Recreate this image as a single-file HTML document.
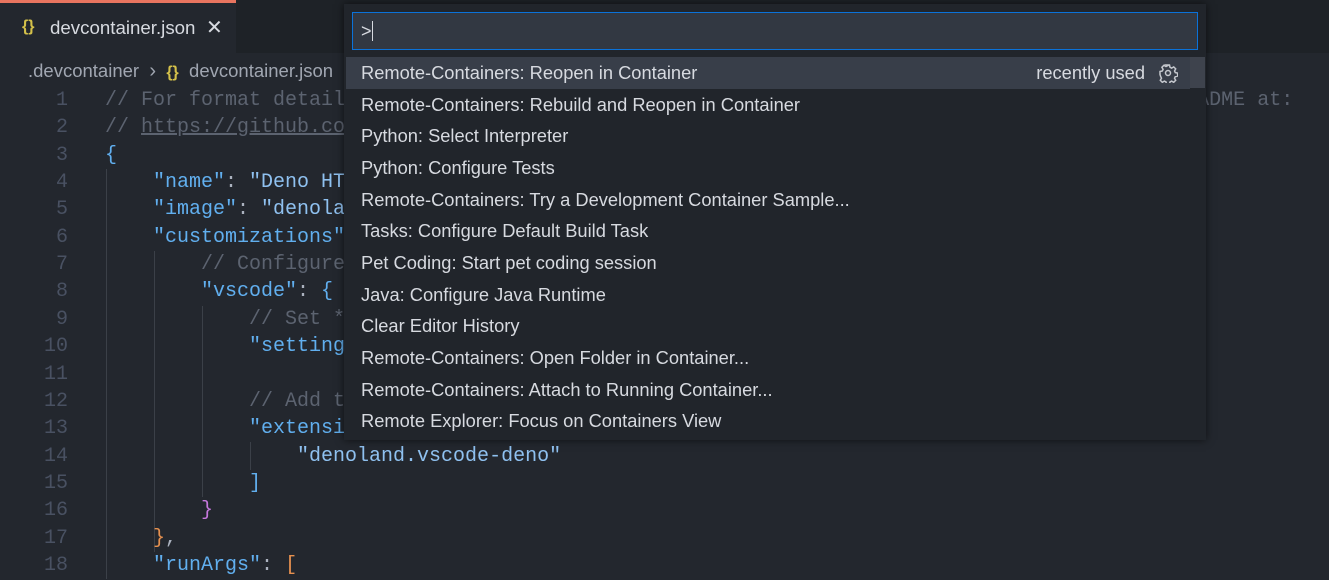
<!DOCTYPE html>
<html><head><meta charset="utf-8"><style>
*{margin:0;padding:0;box-sizing:border-box}
body{width:1329px;height:580px;overflow:hidden;background:#23272e;font-family:"Liberation Sans",sans-serif;position:relative}
.tabbar{position:absolute;left:0;top:0;width:1329px;height:53px;background:#1e2227}
.tab{position:absolute;left:0;top:0;width:236px;height:53px;background:#23272e;border-top:3px solid #e8745f}
.tab .t{position:absolute;left:50px;top:14px;font-size:18.7px;color:#d7dae0}
.br{position:absolute;top:60px;font-size:18.5px;color:#a0a6b1;white-space:pre}
.code{position:absolute;left:0;top:87px;font-family:"Liberation Mono",monospace;font-size:20px}
.ln{position:absolute;left:0;width:68px;text-align:right;color:#495162;height:27.35px;line-height:27.35px}
.cl{position:absolute;left:105px;white-space:pre;height:27.35px;line-height:27.35px;color:#abb2bf}
.c{color:#5c6370}.k{color:#61afef}.s{color:#8fc1f0}.b{color:#61afef}.p{color:#c678dd}.o{color:#e5904f}
.g{position:absolute;width:1px;background:#3b4048}
.qp{position:absolute;left:344px;top:4px;width:862px;height:436px;background:#21252b;box-shadow:0 0 8px rgba(0,0,0,.6)}
.in{position:absolute;left:8px;top:8px;width:846px;height:38px;background:#323842;border:1px solid #0b72d9;color:#d7dae0;font-size:18px;padding:8px 8px}
.row{position:absolute;left:2px;width:844px;height:32px;line-height:32px;padding-left:15px;font-size:18.3px;color:#d7dae0}
.sel{background:#383e49}
</style></head><body>
<div class="tabbar"><div class="tab"><span style="position:absolute;left:22px;top:15px;font-size:16px;color:#d4c14a;font-weight:bold">{}</span><span class="t">devcontainer.json</span><span style="position:absolute;left:206px;top:12px;font-size:20px;color:#d7dae0">✕</span></div></div>
<div class="br" style="left:28px">.devcontainer  <span style="font-size:20px">›</span>  <span style="color:#d4c14a;font-weight:bold;font-size:16px">{}</span>  devcontainer.json</div>
<div class="code">
<div class="g" style="left:106px;top:82px;height:410px"></div>
<div class="g" style="left:154px;top:164px;height:301px"></div>
<div class="g" style="left:202px;top:219px;height:191px"></div>
<div class="g" style="left:250px;top:355px;height:28px"></div>
</div>
<div class="code" id="c"></div>
<script>
var L=[
'<span class="c">// For format details, see https://aka.ms/devcontainer.json. For config options, see the README at:</span>',
'<span class="c">// <u>https://github.com/microsoft/vscode-dev-containers/tree/v0.245.2/containers/deno</u></span>',
'<span class="b">{</span>',
'    <span class="k">"name"</span>: <span class="s">"Deno HTTP"</span>,',
'    <span class="k">"image"</span>: <span class="s">"denoland/deno"</span>,',
'    <span class="k">"customizations"</span>: <span class="p">{</span>',
'        <span class="c">// Configure properties</span>',
'        <span class="k">"vscode"</span>: <span class="b">{</span>',
'            <span class="c">// Set *default*</span>',
'            <span class="k">"settings"</span>: {},',
'',
'            <span class="c">// Add the IDs</span>',
'            <span class="k">"extensions"</span>: [',
'                <span class="s">"denoland.vscode-deno"</span>',
'            <span class="b">]</span>',
'        <span class="p">}</span>',
'    <span class="o">}</span>,',
'    <span class="k">"runArgs"</span>: <span class="o">[</span>'];
var h='';for(var i=0;i<L.length;i++){var t=i*27.35;h+='<div class="ln" style="top:'+t+'px">'+(i+1)+'</div><div class="cl" style="top:'+t+'px">'+L[i]+'</div>';}
document.getElementById('c').innerHTML=h;
</script>
<div class="qp">
<div class="in">&gt;<span style="display:inline-block;width:1px;height:20px;background:#d7dae0;vertical-align:-4px"></span></div>
<div style="position:absolute;left:846px;top:53px;width:15px;height:31px;background:#3e434d"></div>
<div id="rows"></div>
</div>
<script>
var R=['Remote-Containers: Reopen in Container','Remote-Containers: Rebuild and Reopen in Container','Python: Select Interpreter','Python: Configure Tests','Remote-Containers: Try a Development Container Sample...','Tasks: Configure Default Build Task','Pet Coding: Start pet coding session','Java: Configure Java Runtime','Clear Editor History','Remote-Containers: Open Folder in Container...','Remote-Containers: Attach to Running Container...','Remote Explorer: Focus on Containers View'];
var h='';for(var i=0;i<R.length;i++){h+='<div class="row'+(i==0?' sel':'')+'" style="top:'+(53+i*31.65)+'px">'+R[i]+(i==0?'<span style="position:absolute;right:45px">recently used</span><svg style="position:absolute;right:12px;top:6px" width="20" height="20" viewBox="0 0 20 20" fill="none" stroke="#c5c8ce" stroke-width="1.5"><path d="M8.5 2h3l.5 2.3 1.6.8 2.1-1.2 2 2-1.2 2.1.8 1.6 2.3.5v3l-2.3.5-.8 1.6 1.2 2.1-2 2-2.1-1.2-1.6.8-.5 2.3h-3l-.5-2.3-1.6-.8-2.1 1.2-2-2 1.2-2.1-.8-1.6L2 11.5v-3l2.3-.5.8-1.6-1.2-2.1 2-2 2.1 1.2 1.6-.8z"/><circle cx="10" cy="10" r="2.5"/></svg>':'')+'</div>';}
document.getElementById('rows').innerHTML=h;
</script>
</body></html>
